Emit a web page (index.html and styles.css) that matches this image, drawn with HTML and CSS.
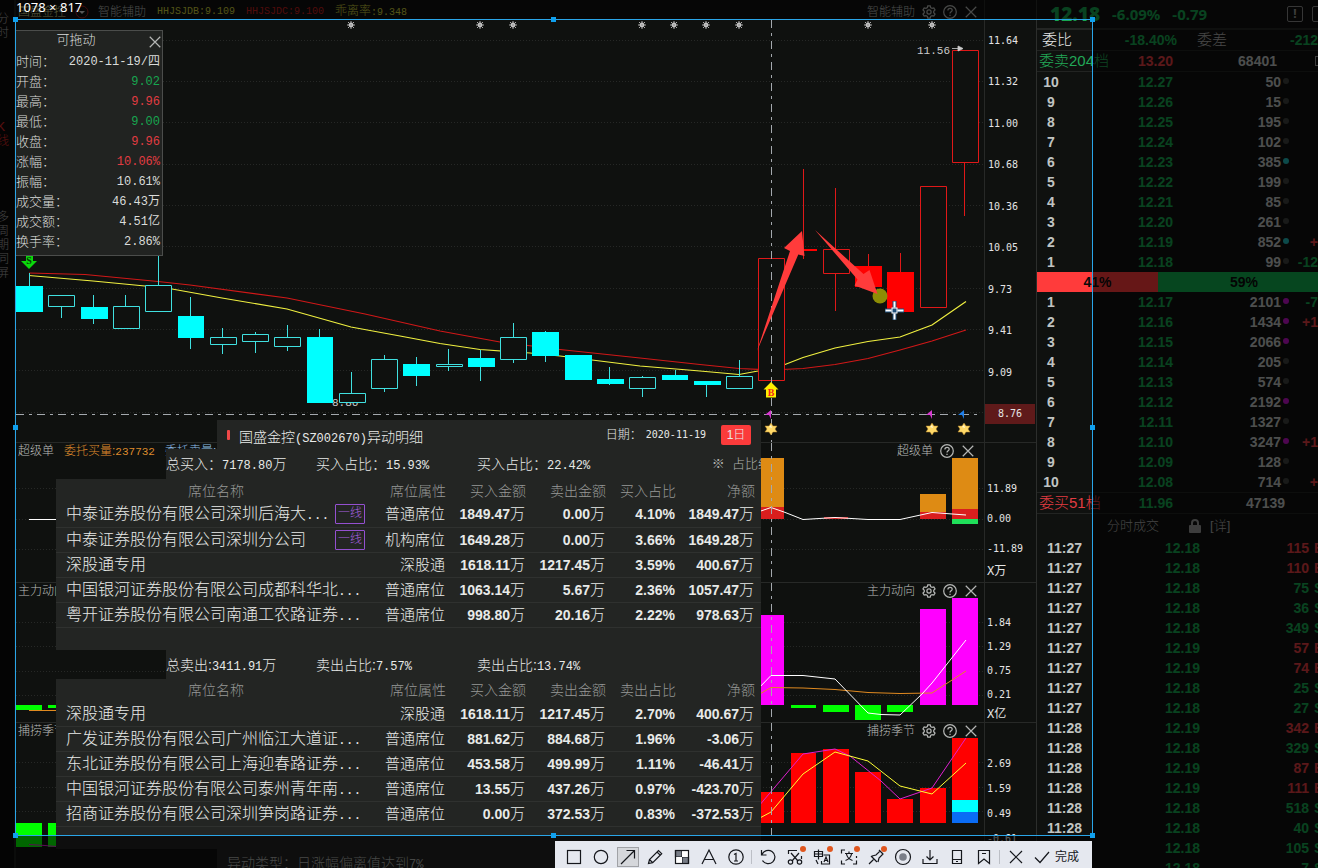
FILE: index.html
```html
<!DOCTYPE html>
<html lang="zh-CN">
<head>
<meta charset="utf-8">
<title>国盛金控</title>
<link rel="stylesheet" href="styles.css">
</head>
<body>
<svg class="defs" aria-hidden="true">
  <symbol id="gear" viewBox="0 0 16 16"><path d="M6.6 1h2.8l.5 2 1.6.9 2-.6 1.4 2.4-1.5 1.5v1.6l1.5 1.5-1.4 2.4-2-.6-1.6.9-.5 2H6.6l-.5-2-1.6-.9-2 .6-1.4-2.4 1.5-1.5V7.2L1.1 5.7l1.4-2.4 2 .6L6.100 3z"/><circle cx="8" cy="8" r="2.400"/></symbol>
  <symbol id="help" viewBox="0 0 16 16"><circle cx="8" cy="8" r="7.200"/><path d="M5.600 6.400C5.600 3 10.500 3.200 10.500 6c0 1.800-2.500 1.800-2.500 3.800M8 11v1.600"/></symbol>
  <symbol id="close" viewBox="0 0 16 16"><path d="M2 2l12 12M14 2L2 14"/></symbol>
  <symbol id="spark" viewBox="-5 -5 10 10"><circle r="2.400" fill="#ddd"/><path d="M0-4v8M-4 0h8M-3-3l6 6M3-3l-6 6" stroke="#aaa" stroke-width="1"/></symbol>
  <symbol id="star" viewBox="-7 -7 14 14"><path d="M0-6l2 3h4L4 0l2 3H2L0 6-2 3h-4l2-3-2-3h4z" fill="#ffd968" stroke="#b98a2c" stroke-width=".5"/><path d="M-2-2l2-2 1 3z" fill="#fff6cf"/></symbol>
</svg>

<main class="app">
  <nav class="rail">
    <a href="#minute">分时</a>
    <a href="#kline" class="on">K线</a>
    <a href="#multi">多周期同屏</a>
  </nav>

  <section class="charts">
    <header class="bar top">
      <span class="stock">国盛金控</span>
      <svg class="drop" viewBox="0 0 14 14"><circle cx="7" cy="7" r="6" fill="none" stroke="#a82020"/><path d="M4 6h6l-3 3z" fill="#ddd"/></svg>
      <span class="mid">智能辅助</span>
      <span class="code yellow">HHJSJDB:9.109</span>
      <span class="code red">HHJSJDC:9.100</span>
      <span class="yellow">乖离率<span class="code">:9.348</span></span>
      <span class="tools">智能辅助
        <button aria-label="设置"><svg><use href="#gear"/></svg></button>
        <button aria-label="帮助"><svg><use href="#help"/></svg></button>
        <button aria-label="关闭"><svg><use href="#close"/></svg></button>
      </span>
    </header>

    <div class="panel main">
      <svg viewBox="16 20 968 422">
        <path class="grid" d="M16 40.500H984M16 81.500H984M16 122.500H984M16 164.500H984M16 205.500H984M16 246.500H984M16 288.500H984M16 329.500H984M16 370.500H984M16 412.500H984"/>
        <path class="ma-red" d="M29 273L85 274.500 158 281.500 190 285 287 298 365 314 440 331 500 342 560 349.500 640 358 700 364.500 739 368.500 771 370 803 368.500 835 364.500 868 358.500 900 350 932 341 966 330"/>
        <path class="ma-yellow" d="M29 275.500L93 281 145 286 172 289 222 298 287 309 351 327 400 336 440 343.500 480 349.500 530 353 560 356 592 360 640 366 700 371 739 374.500 758 371 785 364.500 803 357.500 835 348 868 341.500 900 337 932 325 966 301.500"/>
        <text x="332" y="406" class="mark">8.86</text>
        <g class="down">
          <path d="M29.500 273V286M61.500 307V318M93.500 295V324M125.500 295V306M158.500 255V285M190.500 297V349M222.500 328V337M222.500 345V354M255.500 332V334M255.500 342V353M287.500 325V337M287.500 347V351M319.500 329V337M351.500 372V393M384.500 355V359M384.500 389V392M416.500 357V386M448.500 349V364M448.500 367V371M480.500 350V381M513.500 323V337M513.500 360V363M545.500 331V362M609.500 367V385M642.500 376V377M642.500 389V397M675.500 370V375M706.500 385V397M739.500 360V376"/>
          <path class="hollow" d="M48.500 295.500h26v11h-26zM113.500 306.500h26v22h-26zM145.500 285.500h26v26h-26zM210.500 337.500h26v7h-26zM242.500 334.500h26v7h-26zM274.500 337.500h26v9h-26zM339.500 393.500h26v9h-26zM371.500 359.500h26v29h-26zM436.500 364.500h26v2h-26zM500.500 337.500h26v22h-26zM629.500 377.500h26v11h-26zM726.500 376.500h26v12h-26z"/>
          <path class="solid" d="M16 286h27v26H16zM81 307h27v12H81zM178 316h26v22h-26zM307 337h26v66h-26zM403 364h27v12h-27zM468 358h27v9h-27zM532 332h27v24h-27zM565 355h27v25h-27zM597 379h27v5h-27zM662 375h26v5h-26zM694 381h27v4h-27z"/>
        </g>
        <g class="up">
          <path d="M803.500 169V259M835.500 188V249M835.500 274V311M868.500 254V266M900.500 253V272M964.500 163V216"/>
          <path class="hollow" d="M758.500 258.500h26v122h-26zM823.500 249.500h26v24h-26zM920.500 186.500h26v121h-26zM952.500 50.500h26v112h-26z"/>
          <path class="solid" d="M855 266h27v21h-27zM887 272h27v40h-27zM791 249h26v2h-26z"/>
        </g>
        <path class="cross" d="M771.500 20V442"/>
        <path class="cross" d="M16 414.500H981"/>
        <g>
          <use href="#spark" x="346" y="20" width="10" height="10"/><use href="#spark" x="475" y="20" width="10" height="10"/><use href="#spark" x="508" y="20" width="10" height="10"/><use href="#spark" x="637" y="20" width="10" height="10"/><use href="#spark" x="669" y="20" width="10" height="10"/><use href="#spark" x="701" y="20" width="10" height="10"/><use href="#spark" x="734" y="20" width="10" height="10"/><use href="#spark" x="863" y="20" width="10" height="10"/><use href="#spark" x="927" y="20" width="10" height="10"/>
        </g>
        <text x="917" y="54" class="mark">11.56</text>
        <path d="M952 48.500h10M958 46l5 2.500-5 2.500z" fill="#ccc" stroke="#ccc" stroke-width=".8"/>
        <path d="M26 256h7v5h4l-8 8-8-8h5z" fill="#0bd80b"/>
        <text x="29" y="264" class="sig" fill="#053b05">S</text>
        <path d="M771 382l7.500 7.500h-2.500v8h-10v-8h-2.500z" fill="#ffee00"/>
        <text x="771" y="396" class="sig" fill="#f02020">B</text>
        <path d="M771 410v9l-2-4h-4z" fill="#d63ad0"/>
        <path d="M932 410v9l-2-4h-4z" fill="#d63ad0"/>
        <path d="M964 410v9l-2-4h-4z" fill="#1e7ee8"/>
        <use href="#star" x="764" y="422" width="14" height="14"/><use href="#star" x="925" y="422" width="14" height="14"/><use href="#star" x="957" y="422" width="14" height="14"/>
        <path d="M757 351L790 251l-6-3 18-17 2.500 25-6.200-1.500z" fill="#ff3b3b"/>
        <circle cx="880" cy="296" r="7.500" fill="#8d8d05"/>
        <path d="M815 230L863.500 274l6-4 8 24-23-8.500 3-6z" fill="#ff3b3b"/>
        <path d="M894.500 301v7M894.500 313v7M885 310.500h7M897 310.500h7" stroke="#1b4d78" stroke-width="4"/>
        <path d="M894.500 301.500v6M894.500 313.500v6M885.500 310.500h6M897.500 310.500h6" stroke="#fff" stroke-width="2"/>
        <rect x="892" y="308" width="5" height="5" fill="#1b4d78" stroke="#fff"/>
      </svg>
    </div>

    <div class="panel">
      <svg viewBox="16 443 968 139">
        <path class="grid" d="M16 488.500H984M16 519.500H984M16 549.500H984"/>
        <path d="M758 458h26v49h-26zM920 494h26v18h-26zM952 458h26v51h-26z" fill="#de8b14"/>
        <path d="M758 507h26v12h-26zM920 512h26v7h-26zM952 509h26v10h-26zM824 517h24v2h-24z" fill="#d91e1e"/>
        <path d="M952 519h26v5h-26z" fill="#1fe05a"/>
        <path class="line" stroke="#fff" d="M29 519.500H60M758 512L771 507.500 784 512 803 519.500 835 517.500 868 519.500 900 519.500 932 512.500 966 515"/>
        <path class="cross" d="M771.500 443V582"/>
      </svg>
      <div class="bar">
        <span>超级单</span>
        <span class="orange">委托买量:<span class="n">237732</span></span>
        <span class="sky">委托卖量:</span>
        <span class="tools short">超级单
          <button aria-label="帮助"><svg><use href="#help"/></svg></button>
          <button aria-label="关闭"><svg><use href="#close"/></svg></button>
        </span>
      </div>
    </div>

    <div class="panel">
      <svg viewBox="16 583 968 139">
        <path class="grid" d="M16 622.500H984M16 646.500H984M16 671.500H984M16 695.500H984"/>
        <path d="M758 615h26v90h-26zM920 609h26v96h-26zM952 598h26v107h-26z" fill="#f0f"/>
        <path d="M16 705h26v5H16zM48 705h26v3H48zM791 705h25v3h-25zM823 705h26v7h-26zM855 705h26v15h-26zM887 705h26v7h-26z" fill="#0f0"/>
        <path class="line" stroke="#e08a20" d="M29 710.500H60M758 695L771 687.500 803 688 835 689.500 868 692.500 900 693.500 932 693 966 671"/>
        <path class="line" stroke="#fff" d="M758 689L771 675.500 803 675.500 835 679 868 713 881 714.500 900 715 922 694 932 683 966 640"/>
        <path class="cross" d="M771.500 583V722"/>
      </svg>
      <div class="bar">
        <span>主力动向</span>
        <span class="tools">主力动向
          <button aria-label="设置"><svg><use href="#gear"/></svg></button>
          <button aria-label="帮助"><svg><use href="#help"/></svg></button>
          <button aria-label="关闭"><svg><use href="#close"/></svg></button>
        </span>
      </div>
    </div>

    <div class="panel last">
      <svg viewBox="16 723 968 139">
        <path class="grid" d="M16 762.500H984M16 787.500H984M16 811.500H984"/>
        <path d="M758 792h26v31h-26zM791 753h25v70h-25zM823 749h26v74h-26zM855 772h26v51h-26zM887 799h26v24h-26zM920 788h26v35h-26zM952 738h26v62h-26z" fill="#f00"/>
        <path d="M952 800h26v12h-26z" fill="#0ff"/>
        <path d="M952 812h26v11h-26z" fill="#0a6cf5"/>
        <path d="M16 823h26v24H16zM48 823h8v24h-8z" fill="#0f0"/>
        <path class="line" stroke="#e020d0" d="M29 844.500L45 845.500 56 846.500M758 807L803 754 835 749 850 756 881 781 900 799 932 788 966 738"/>
        <path class="line" stroke="#ff3" d="M758 819L771 812 803 774 835 752 868 761 900 786 932 794 966 763"/>
        <path class="cross" d="M771.500 723V841"/>
      </svg>
      <div class="bar">
        <span>捕捞季节</span>
        <span class="tools">捕捞季节
          <button aria-label="设置"><svg><use href="#gear"/></svg></button>
          <button aria-label="帮助"><svg><use href="#help"/></svg></button>
          <button aria-label="关闭"><svg><use href="#close"/></svg></button>
        </span>
      </div>
    </div>
  </section>

  <aside class="axis">
    <div class="scale price"><span>11.64</span><span>11.32</span><span>11.00</span><span>10.68</span><span>10.36</span><span>10.05</span><span>9.73</span><span>9.41</span><span>9.09</span><b>8.76</b></div>
    <div class="scale s30"><span>11.89</span><span>0.00</span><span>-11.89</span><em>X万</em></div>
    <div class="scale s24"><span>1.84</span><span>1.29</span><span>0.75</span><span>0.21</span><em>X亿</em></div>
    <div class="scale s25"><span>2.69</span><span>1.59</span><span>0.49</span><span>-0.61</span></div>
  </aside>

  <aside class="book">
    <div class="quote"><strong>12.18</strong><span>-6.09%</span><span>-0.79</span><i class="alert">!</i><i class="alert cut"></i></div>
    <div class="ratio"><span class="cn">委比</span><b class="g">-18.40%</b><span class="cn dim">委差</span><b class="g">-212</b></div>
    <div class="total"><span class="g cn">委卖204档</span><b class="r">13.20</b><b>68401</b><i class="box"></i></div>
    <table class="levels">
      <tr><th>10</th><td class="g">12.27</td><td>50</td><td><i></i></td><td></td></tr>
      <tr><th>9</th><td class="g">12.26</td><td>15</td><td><i></i></td><td></td></tr>
      <tr><th>8</th><td class="g">12.25</td><td>195</td><td><i></i></td><td></td></tr>
      <tr><th>7</th><td class="g">12.24</td><td>102</td><td><i></i></td><td></td></tr>
      <tr><th>6</th><td class="g">12.23</td><td>385</td><td><i class="teal"></i></td><td></td></tr>
      <tr><th>5</th><td class="g">12.22</td><td>199</td><td><i></i></td><td></td></tr>
      <tr><th>4</th><td class="g">12.21</td><td>85</td><td><i></i></td><td></td></tr>
      <tr><th>3</th><td class="g">12.20</td><td>261</td><td><i></i></td><td></td></tr>
      <tr><th>2</th><td class="g">12.19</td><td>852</td><td><i class="teal"></i></td><td class="r">+</td></tr>
      <tr><th>1</th><td class="g">12.18</td><td>99</td><td><i></i></td><td class="g">-12</td></tr>
    </table>
    <div class="split"><span class="sell">41%</span><span class="buy">59%</span></div>
    <table class="levels">
      <tr><th>1</th><td class="g">12.17</td><td>2101</td><td><i class="violet"></i></td><td class="g">-7</td></tr>
      <tr><th>2</th><td class="g">12.16</td><td>1434</td><td><i class="violet"></i></td><td class="r">+1</td></tr>
      <tr><th>3</th><td class="g">12.15</td><td>2066</td><td><i class="violet"></i></td><td></td></tr>
      <tr><th>4</th><td class="g">12.14</td><td>205</td><td><i></i></td><td></td></tr>
      <tr><th>5</th><td class="g">12.13</td><td>574</td><td><i></i></td><td></td></tr>
      <tr><th>6</th><td class="g">12.12</td><td>2192</td><td><i class="violet"></i></td><td></td></tr>
      <tr><th>7</th><td class="g">12.11</td><td>1327</td><td><i></i></td><td></td></tr>
      <tr><th>8</th><td class="g">12.10</td><td>3247</td><td><i class="violet"></i></td><td class="r">+1</td></tr>
      <tr><th>9</th><td class="g">12.09</td><td>128</td><td><i></i></td><td></td></tr>
      <tr><th>10</th><td class="g">12.08</td><td>714</td><td><i></i></td><td class="r">+</td></tr>
    </table>
    <div class="total buyside"><span class="r cn">委买51档</span><b class="g">11.96</b><b>47139</b></div>
    <div class="deals"><span>分时成交</span>
      <svg viewBox="0 0 12 14"><path d="M3 6V4a3 3 0 0 1 6 0v2" fill="none" stroke="#999" stroke-width="2"/><rect y="6" width="12" height="8" rx="1" fill="#999"/></svg>
      <a href="#detail">[详]</a></div>
    <table class="ticks">
      <tr><td>11:27</td><td class="g">12.18</td><td class="r">115</td><td class="r">B</td></tr>
      <tr><td>11:27</td><td class="g">12.18</td><td class="r">110</td><td class="r">B</td></tr>
      <tr><td>11:27</td><td class="g">12.18</td><td class="g">75</td><td class="g">S</td></tr>
      <tr><td>11:27</td><td class="g">12.18</td><td class="g">36</td><td class="g">S</td></tr>
      <tr><td>11:27</td><td class="g">12.18</td><td class="g">349</td><td class="g">S</td></tr>
      <tr><td>11:27</td><td class="g">12.19</td><td class="r">57</td><td class="r">B</td></tr>
      <tr><td>11:27</td><td class="g">12.19</td><td class="r">74</td><td class="r">B</td></tr>
      <tr><td>11:27</td><td class="g">12.18</td><td class="g">25</td><td class="g">S</td></tr>
      <tr><td>11:27</td><td class="g">12.18</td><td class="g">27</td><td class="g">S</td></tr>
      <tr><td>11:28</td><td class="g">12.19</td><td class="r">342</td><td class="r">B</td></tr>
      <tr><td>11:28</td><td class="g">12.18</td><td class="g">329</td><td class="g">S</td></tr>
      <tr><td>11:28</td><td class="g">12.19</td><td class="r">87</td><td class="r">B</td></tr>
      <tr><td>11:28</td><td class="g">12.19</td><td class="r">111</td><td class="r">B</td></tr>
      <tr><td>11:28</td><td class="g">12.18</td><td class="g">518</td><td class="g">S</td></tr>
      <tr><td>11:28</td><td class="g">12.18</td><td class="g">40</td><td class="g">S</td></tr>
      <tr><td></td><td class="g">12.18</td><td class="g">105</td><td class="g">S</td></tr>
      <tr><td></td><td class="g">12.18</td><td class="g">7</td><td class="g">S</td></tr>
    </table>
  </aside>
</main>

<section class="tip">
  <header><h2>可拖动</h2><button aria-label="关闭"><svg><use href="#close"/></svg></button></header>
  <dl>
    <div><dt>时间：</dt><dd>2020-11-19/四</dd></div>
    <div><dt>开盘：</dt><dd class="g">9.02</dd></div>
    <div><dt>最高：</dt><dd class="r">9.96</dd></div>
    <div><dt>最低：</dt><dd class="g">9.00</dd></div>
    <div><dt>收盘：</dt><dd class="r">9.96</dd></div>
    <div><dt>涨幅：</dt><dd class="r">10.06%</dd></div>
    <div><dt>振幅：</dt><dd>10.61%</dd></div>
    <div><dt>成交量：</dt><dd>46.43万</dd></div>
    <div><dt>成交额：</dt><dd>4.51亿</dd></div>
    <div><dt>换手率：</dt><dd>2.86%</dd></div>
  </dl>
</section>

<section class="detail">
  <header class="title">
    <i></i><h1>国盛金控<span class="n">(SZ002670)</span>异动明细</h1>
    <span class="date">日期：</span><span class="date day">2020-11-19</span><button>1日</button>
  </header>
  <div class="sum first"><span>总买入：<span class="n">7178.80</span>万</span><span>买入占比：<span class="n">15.93%</span></span><span>买入占比：<span class="n">22.42%</span></span><span class="note">※&nbsp; 占比约</span></div>
  <table class="seats">
    <thead><tr><th>席位名称</th><th>席位属性</th><th>买入金额</th><th>卖出金额</th><th>买入占比</th><th>净额</th></tr></thead>
    <tbody>
      <tr><td>中泰证券股份有限公司深圳后海大<span class="e">...</span><mark>一线</mark></td><td>普通席位</td><td>1849.47<u>万</u></td><td>0.00<u>万</u></td><td>4.10%</td><td>1849.47<u>万</u></td></tr>
      <tr><td>中泰证券股份有限公司深圳分公司<mark>一线</mark></td><td>机构席位</td><td>1649.28<u>万</u></td><td>0.00<u>万</u></td><td>3.66%</td><td>1649.28<u>万</u></td></tr>
      <tr><td>深股通专用</td><td>深股通</td><td>1618.11<u>万</u></td><td>1217.45<u>万</u></td><td>3.59%</td><td>400.67<u>万</u></td></tr>
      <tr><td>中国银河证券股份有限公司成都科华北<span class="e">...</span></td><td>普通席位</td><td>1063.14<u>万</u></td><td>5.67<u>万</u></td><td>2.36%</td><td>1057.47<u>万</u></td></tr>
      <tr><td>粤开证券股份有限公司南通工农路证券<span class="e">...</span></td><td>普通席位</td><td>998.80<u>万</u></td><td>20.16<u>万</u></td><td>2.22%</td><td>978.63<u>万</u></td></tr>
    </tbody>
  </table>
  <div class="spacer"></div>
  <div class="sum"><span>总卖出:<span class="n">3411.91</span>万</span><span>卖出占比:<span class="n">7.57%</span></span><span>卖出占比:<span class="n">13.74%</span></span></div>
  <table class="seats">
    <thead><tr><th>席位名称</th><th>席位属性</th><th>买入金额</th><th>卖出金额</th><th>卖出占比</th><th>净额</th></tr></thead>
    <tbody>
      <tr><td>深股通专用</td><td>深股通</td><td>1618.11<u>万</u></td><td>1217.45<u>万</u></td><td>2.70%</td><td>400.67<u>万</u></td></tr>
      <tr><td>广发证券股份有限公司广州临江大道证<span class="e">...</span></td><td>普通席位</td><td>881.62<u>万</u></td><td>884.68<u>万</u></td><td>1.96%</td><td>-3.06<u>万</u></td></tr>
      <tr><td>东北证券股份有限公司上海迎春路证券<span class="e">...</span></td><td>普通席位</td><td>453.58<u>万</u></td><td>499.99<u>万</u></td><td>1.11%</td><td>-46.41<u>万</u></td></tr>
      <tr><td>中国银河证券股份有限公司泰州青年南<span class="e">...</span></td><td>普通席位</td><td>13.55<u>万</u></td><td>437.26<u>万</u></td><td>0.97%</td><td>-423.70<u>万</u></td></tr>
      <tr><td>招商证券股份有限公司深圳笋岗路证券<span class="e">...</span></td><td>普通席位</td><td>0.00<u>万</u></td><td>372.53<u>万</u></td><td>0.83%</td><td>-372.53<u>万</u></td></tr>
    </tbody>
  </table>
  <div class="spacer"></div>
  <footer>异动类型：日涨幅偏离值达到<span class="n">7%</span></footer>
</section>

<div class="snip">
  <span class="size">1078 × 817</span>
  <i class="h nw"></i><i class="h nn"></i><i class="h ne"></i><i class="h ww"></i><i class="h ee"></i><i class="h sw"></i><i class="h ss"></i><i class="h se"></i>
</div>

<div class="toolbar">
  <button aria-label="矩形"><svg viewBox="0 0 18 18"><rect x="2.500" y="2.500" width="13" height="13"/></svg></button>
  <button aria-label="椭圆"><svg viewBox="0 0 18 18"><circle cx="9" cy="9" r="6.700"/></svg></button>
  <button aria-label="箭头" class="on"><svg viewBox="0 0 18 18"><path d="M2 16L15.500 2.500M7.500 2.500h8v8"/></svg></button>
  <button aria-label="画笔"><svg viewBox="0 0 18 18"><path d="M2.500 15.500l1-4 9-9 3.200 3.200-9 9zM11 4l3.200 3.200M3.500 11.500l3 3"/></svg></button>
  <button aria-label="马赛克"><svg viewBox="0 0 18 18"><path d="M2.500 2.500H9V9H2.500zM9 9h6.500v6.500H9z" fill="#777c86"/><path d="M9 2.500h6.500V9H9zM2.500 9H9v6.500H2.500z" fill="#fff" stroke="none"/><rect x="2.500" y="2.500" width="13" height="13"/></svg></button>
  <button aria-label="文字"><svg viewBox="0 0 18 18"><path d="M2 16L9 2l7 14M4.500 11.500h9"/></svg></button>
  <button aria-label="序号"><svg viewBox="0 0 18 18"><circle cx="9" cy="9" r="7.200"/><path d="M7 6.500l2-1v7.500M7 13h4"/></svg></button>
  <hr>
  <button aria-label="撤销"><svg viewBox="0 0 18 18"><path d="M2.500 2v5h5M3 6.500A6.700 6.700 0 1 1 3.500 12.500"/></svg></button>
  <button aria-label="裁剪" class="new"><svg viewBox="0 0 18 18"><path d="M2.500 6V2.500H11M15.500 8v3M5 5l7 8M13 5l-7 8"/><circle cx="4.500" cy="14" r="2.200"/><circle cx="13.500" cy="14" r="2.200"/></svg></button>
  <button aria-label="翻译" class="new"><svg viewBox="0 0 18 18"><path d="M1.500 3.500h8v5h-8zM5.500 1.500v10M1.500 6h8M10.500 7h6v9h-8v-3M11 14l2-5 2 5M11.500 12.500h3M3 12l2 4"/></svg></button>
  <button aria-label="识别文字" class="new"><svg viewBox="0 0 18 18"><path d="M5 2H1.500v3.500M1.500 12.500V16H5M13 16h3.500v-3.500M16.500 8v2M9 3.500v2M5 5.500h8M6.500 6c.5 3 3 5.500 6 6.500M11.500 6c-.5 3-3 5.500-6 6.500"/></svg></button>
  <button aria-label="钉住" class="new"><svg viewBox="0 0 18 18"><path d="M2 16l5-5M4 8l6 6M5 8l4-1 4-4 3 3-4 4-1 4M12 2l4 4"/></svg></button>
  <button aria-label="录制"><svg viewBox="0 0 18 18"><circle cx="9" cy="9" r="7.500"/><circle cx="9" cy="9" r="3.800" fill="#7a7e88" stroke="none"/></svg></button>
  <button aria-label="下载"><svg viewBox="0 0 18 18"><path d="M9 2v10M5.500 8.500L9 12l3.500-3.500M2 11v4.500h14V11"/></svg></button>
  <button aria-label="手机"><svg viewBox="0 0 18 18"><path d="M4.500 2.500h9v13h-9zM4.500 11.500h9M8 13.500h2"/></svg></button>
  <button aria-label="收藏"><svg viewBox="0 0 18 18"><path d="M3.500 15.500v-13h11v13L9 11zM7 5.500h4"/></svg></button>
  <hr>
  <button aria-label="取消"><svg viewBox="0 0 18 18"><path d="M3 3l12 12M15 3L3 15"/></svg></button>
  <button class="done"><svg viewBox="0 0 18 18"><path d="M2 9.500l5 5L16 4"/></svg>完成</button>
</div>
</body>
</html>
```
FILE: styles.css
```css
* { box-sizing: border-box; }

body {
  margin: 0;
  height: 100vh;
  overflow: hidden;
  position: relative;
  background: #0f110f;
  color: #d0d2d0;
  font: 300 13px/20px "Liberation Sans", "Noto Sans CJK SC", sans-serif;
}

button { border: 0; padding: 0; background: none; color: inherit; font: inherit; }
a { color: inherit; text-decoration: none; }
h1, h2, dl, dd { margin: 0; font-weight: inherit; }
i, em { font-style: normal; }
table { border-collapse: collapse; table-layout: fixed; width: 100%; }
td, th { padding: 0; }

.defs { position: absolute; width: 0; height: 0; }
.g { color: #17a650; }
.r { color: #e23c42; }
.n { font-family: "Liberation Mono", monospace; font-size: 12px; line-height: 1; }

.app {
  display: grid;
  grid-template-columns: 16px minmax(0, 1fr) 53px 281px;
  height: 100%;
  overflow: hidden;
}

/* left rail */
.rail {
  display: flex;
  flex-direction: column;
  gap: 62px;
  padding: 12px 0;
  background: #0b0c0b;
  border-right: 2px solid #1c1e1c;
  overflow: hidden;
  color: #aaa;
}
.rail a { width: 12px; margin-left: -3px; font-size: 12px; line-height: 14px; word-break: break-all; }
.rail .on { margin-top: 18px; color: #e02828; }

/* chart column */
.charts { min-width: 0; }
.bar { display: flex; align-items: center; height: 16px; padding-left: 2px; gap: 10px; font-size: 12px; line-height: 16px; color: #b9bbb9; }
.bar.top { height: 20px; padding-top: 4px; gap: 11px; }
.stock { color: #d8d890; }
.drop { width: 14px; height: 14px; margin: 0 -2px; }
.code { font-family: "Liberation Mono", "Noto Sans CJK SC", monospace; font-size: 10px; }
.yellow { color: #d0d03c; }
.red { color: #c81e1e; }
.orange { color: #de8b2c; }
.sky { color: #8fbfe8; }
.orange .n { font-size: 11px; }
.tools { display: flex; align-items: center; gap: 7px; margin-left: auto; padding-right: 6px; }
.tools.short { padding-right: 9px; }
.tools button, .tip button { width: 14px; height: 14px; display: flex; }
.tools svg, .tip svg { width: 14px; height: 14px; fill: none; stroke: #b5b7b5; stroke-width: 1.4; }

.panel { display: grid; height: 140px; border-top: 1px solid #272927; }
.panel > * { grid-area: 1 / 1; }
.panel > svg { display: block; width: 100%; height: 139px; }
.panel.main { height: 422px; border: 0; }
.panel.main > svg { height: 422px; }

.grid { stroke: #262826; stroke-dasharray: 1 2; }
.cross { stroke: #a4a9ae; stroke-dasharray: 8 5 3 5; }
.ma-red, .ma-yellow, .line { fill: none; }
.ma-red { stroke: #d01818; stroke-width: 1.2; }
.ma-yellow { stroke: #f0f040; stroke-width: 1.2; }
.down path { stroke: #40e0e0; }
.up path { stroke: #e01818; }
.hollow { fill: #0f110f; }
.down .solid { fill: #0ff; stroke: none; }
.up .solid { fill: #f00; stroke: none; }
.mark { fill: #ccc; font: 11px "Liberation Mono", monospace; }
.sig { font: bold 10px "Liberation Serif", serif; text-anchor: middle; }

/* value axis */
.axis { border-left: 1px solid #272927; border-right: 1px solid #2c2e2c; padding-top: 20px; color: #e4e4e4; font: 10px "DejaVu Sans Mono", "Noto Sans CJK SC", monospace; }
.scale { height: 140px; border-top: 1px solid #272927; padding-left: 2px; display: flex; flex-direction: column; }
.scale em { font-size: 12px; line-height: 14px; }
.price { height: 422px; border: 0; padding: 11px 0 0 3px; }
.price span { flex: 1; line-height: 20px; }
.price b { margin: 0 1px 18px -3px; line-height: 20px; text-align: center; background: #5f1a1a; font-weight: 400; }
.s30 { padding-top: 31px; line-height: 30px; }
.s24 { padding-top: 28px; line-height: 24px; }
.s25 { padding-top: 28px; line-height: 25px; }

/* order book */
.book { overflow: hidden; font: bold 14px/20px "Liberation Sans", "Noto Sans CJK SC", sans-serif; color: #c0c4c2; }
.cn { font-weight: 300; font-size: 15px; color: #e8e8e8; white-space: nowrap; }
.cn.dim { color: #b0b0b0; }
.cn.g { color: #22a857; }
.cn.r { color: #e23c42; }
.quote { display: flex; align-items: center; gap: 12px; height: 30px; padding-left: 13px; border-bottom: 2px solid #242624; color: #17a650; font-family: "Noto Sans", sans-serif; font-size: 15px; white-space: nowrap; }
.quote strong { font-size: 19px; }
.quote span + span { flex: 1; }
.alert { flex: none; width: 16px; height: 16px; border: 1px solid #888; border-radius: 2px; color: #999; font-size: 12px; line-height: 14px; text-align: center; }
.alert.cut { margin-right: -10px; }
.alert + .alert { margin-left: -3px; }
.ratio { display: grid; grid-template-columns: 45px 90px 1fr auto; height: 21px; padding-left: 5px; border-bottom: 1px solid #222422; }
.ratio b { text-align: right; }
.ratio .dim { padding-left: 20px; }
.total { display: grid; grid-template-columns: 72px 62px 104px 1fr; height: 21px; padding-left: 2px; border-bottom: 1px solid #222422; }
.total b { text-align: right; }
.total.buyside { grid-template-columns: 72px 62px 112px 1fr; height: 22px; border-top: 1px solid #222422; }
.box { width: 12px; height: 10px; margin: 5px 0 0 38px; border: 1px solid #999; }
.levels tr, .ticks tr { height: 20px; }
.levels th { width: 28px; }
.levels td { width: 108px; text-align: right; }
.levels td:nth-child(4) { width: 10px; }
.levels td:nth-child(5) { width: auto; overflow: hidden; }
.levels i { display: block; width: 6px; height: 6px; margin: 0 2px 2px; border-radius: 50%; background: #404240; }
.levels .teal { background: #20b8b8; }
.levels .violet { background: #c010c8; }
.split { display: flex; height: 20px; text-align: center; color: #0a0a0a; }
.sell { width: 43%; background: #ff3b3b; }
.buy { flex: 1; padding-left: 12px; background: #0fb04e; }
.deals { display: flex; align-items: center; height: 24px; padding-left: 70px; font-weight: 300; font-size: 13px; color: #aaa; }
.deals svg { width: 12px; height: 14px; margin: 0 9px 0 30px; }
.ticks td { text-align: right; width: 45px; }
.ticks td:nth-child(2) { width: 118px; }
.ticks td:nth-child(3) { width: 109px; }
.ticks td:nth-child(4) { width: auto; padding-left: 5px; text-align: left; overflow: hidden; }

/* floating quote card */
.tip { position: absolute; left: 15px; top: 30px; width: 148px; padding-bottom: 3px; background: #212321; border: 1px solid #4b4d4b; color: #dadcda; }
.tip header { display: flex; align-items: center; height: 21px; }
.tip h2 { flex: 1; padding-right: 12px; text-align: center; font-size: 13px; line-height: 16px; margin-bottom: 4px; }
.tip dl div { display: flex; justify-content: space-between; padding-right: 2px; height: 20px; }
.tip dd { font: 12px/20px "Liberation Mono", "Noto Sans CJK SC", monospace; }

/* seat detail card */
.detail { position: absolute; left: 56px; top: 420px; width: 705px; color: #e8eae8; }
.title, .sum, .seats, .spacer, .detail footer { background: #232523; }
.title { display: flex; align-items: center; height: 29px; margin-left: 161px; padding-left: 10px; padding-right: 10px; }
.title i { width: 3px; height: 10px; background: #f04848; border-radius: 1px; }
.title h1 { flex: 1; padding-left: 9px; padding-top: 4px; font-size: 14px; line-height: 24px; }
.date { font-size: 12px; }
.day { padding-left: 4px; font-family: "DejaVu Sans Mono", monospace; font-size: 10px; }
.title button { width: 30px; height: 20px; margin-left: 15px; background: #fb3b3b; border-radius: 2px; font-size: 12px; }
.sum { display: grid; grid-template-columns: 150px 161px 1fr auto; height: 30px; margin-left: 110px; font-size: 14px; line-height: 30px; white-space: nowrap; overflow: hidden; }
.sum + .seats { margin: 0; }
.spacer + .sum { height: 29px; }
.note { color: #b0b2b0; font-size: 13px; margin-right: -10px; }
.seats th { height: 23px; font-weight: 300; font-size: 14px; line-height: 20px; color: #969896; text-align: right; }
.seats th:first-child { width: 314px; text-align: center; padding-left: 6px; }
.seats th:nth-child(2) { width: 76px; }
.seats th:nth-child(3), .seats th:nth-child(4) { width: 80px; }
.seats th:nth-child(5) { width: 70px; }
.seats th:last-child { padding-right: 6px; }
.seats td { height: 25px; border-bottom: 1px solid #2f312f; text-align: right; white-space: nowrap; font-weight: bold; font-size: 14px; line-height: 20px; }
.seats td:first-child { padding: 0 5px 0 10px; text-align: left; font-weight: 300; font-size: 16px; }
.seats td:nth-child(2) { padding-right: 1px; font-weight: 300; font-size: 15px; }
.seats td:nth-child(n+3) { padding-right: 1px; }
.seats td:last-child { padding-right: 7px; }
.seats u { font-weight: 300; font-size: 15px; line-height: 1; text-decoration: none; }
.e { font-family: "Liberation Mono", monospace; font-size: 13px; line-height: 1; }
.seats mark { float: right; width: 30px; height: 20px; border: 1px solid #9450d0; border-radius: 1px; background: none; color: #a860e0; font-size: 12px; line-height: 17px; text-align: center; }
.spacer { height: 22px; }
.detail footer { margin-left: 161px; padding: 4px 10px; font-size: 14px; color: #b0b2b0; }

/* capture frame: everything outside is dimmed */
.snip { position: absolute; inset: 19px 225px 32px 15px; border: 1px solid #2aa5e8; box-shadow: 0 0 0 2000px rgba(0, 0, 0, .6); }
.size { position: absolute; left: 0; top: -22px; color: #fff; font: 13px/18px "Noto Sans", sans-serif; white-space: nowrap; }
.h { position: absolute; width: 5px; height: 5px; background: #10a0ee; }
.nw, .nn, .ne { top: -3px; }
.sw, .ss, .se { bottom: -3px; }
.nw, .ww, .sw { left: -3px; }
.ne, .ee, .se { right: -3px; }
.nn, .ss { left: calc(50% - 3px); }
.ww, .ee { top: calc(50% - 3px); }

.toolbar { position: absolute; right: 226px; bottom: 0; display: flex; height: 27px; padding: 5px 9px 0 5px; background: #e5e8ef; color: #15171c; }
.toolbar button { position: relative; flex: none; width: 27px; height: 22px; display: flex; align-items: center; justify-content: center; }
.toolbar svg { width: 18px; height: 18px; fill: none; stroke: #15171c; stroke-width: 1.2; }
.toolbar .on svg { width: 22px; height: 20px; padding: 1px; background: #d5d7db; outline: 1px solid #a0a2a6; outline-offset: -1px; }
.toolbar .new::after { content: ""; position: absolute; right: 2px; top: 0; width: 6px; height: 6px; border-radius: 50%; background: #e0561e; }
.toolbar hr { width: 1px; height: 14px; margin: 4px 2px; border: 0; background: #bcbfc6; }
.toolbar .done { width: 54px; gap: 4px; font-size: 12px; font-weight: 400; }
```
